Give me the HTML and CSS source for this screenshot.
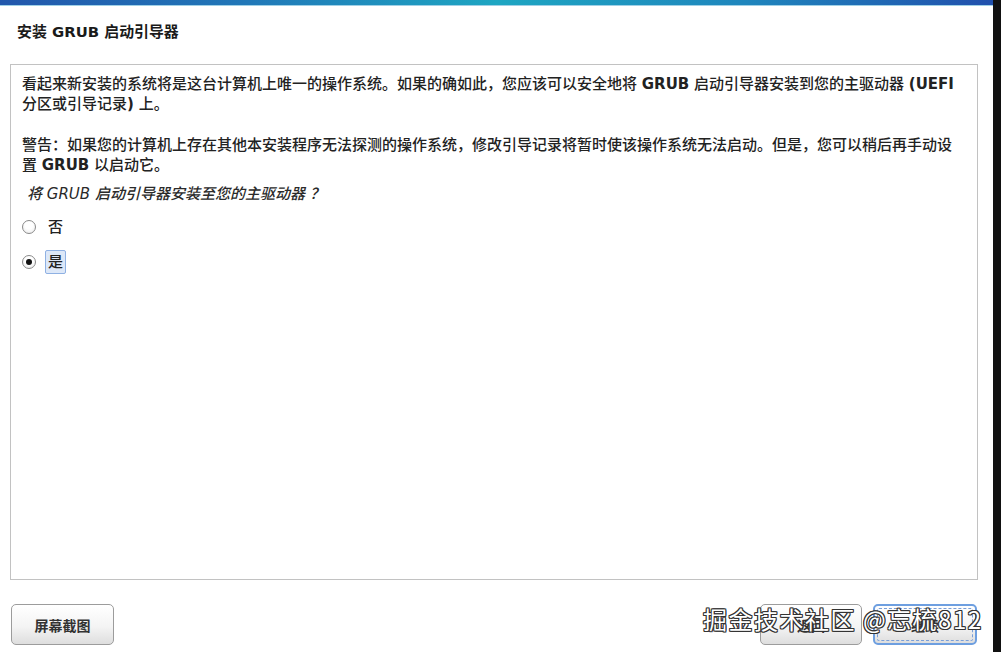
FILE: index.html
```html
<!DOCTYPE html>
<html lang="zh-CN">
<head>
<meta charset="utf-8">
<title>安装 GRUB 启动引导器</title>
<link rel="stylesheet" href="styles.css">
</head>
<body>
<div class="screen">
  <div class="main">
    <div class="topbar"></div>
    <h1 class="title">安装 <b class="latin">GRUB</b> 启动引导器</h1>
    <div class="panel">
      <p class="para">看起来新安装的系统将是这台计算机上唯一的操作系统。如果的确如此，您应该可以安全地将 <b class="latin">GRUB</b> 启动引导器安装到您的主驱动器 <b class="latin">(UEFI</b><br>分区或引导记录<b class="latin">)</b> 上。</p>
      <p class="para second">警告：如果您的计算机上存在其他本安装程序无法探测的操作系统，修改引导记录将暂时使该操作系统无法启动。但是，您可以稍后再手动设<br>置 <b class="latin">GRUB</b> 以启动它。</p>
      <p class="question">将 <span class="latin-i">GRUB</span> 启动引导器安装至您的主驱动器 ？</p>
      <div class="options">
        <label class="option"><span class="radio"></span><span class="opt-label">否</span></label>
        <label class="option"><span class="radio checked"></span><span class="opt-label focused">是</span></label>
      </div>
    </div>
    <div class="buttons">
      <button class="btn">屏幕截图</button>
      <div class="spacer"></div>
      <button class="btn back">返回</button>
      <button class="btn primary"><span class="focus-ring">继续</span></button>
    </div>
    <div class="watermark">掘金技术社区 @忘梳812</div>
  </div>
  <div class="edge"></div>
</div>
</body>
</html>
```
FILE: styles.css
```css
html, body {
  margin: 0;
  padding: 0;
  background: #ffffff;
}
body {
  font-family: "DejaVu Sans", "Noto Sans CJK SC", sans-serif;
  color: #222222;
}
.screen {
  display: flex;
  width: 1001px;
  height: 652px;
  overflow: hidden;
}
.main {
  position: relative;
  flex: 1;
  display: flex;
  flex-direction: column;
  background: #ffffff;
}
.edge {
  width: 8px;
  background: #111111;
}
.topbar {
  height: 5px;
  background: linear-gradient(90deg, #2257ac 0%, #2178b8 25%, #1ea6c2 50%, #1f86bd 75%, #2150ad 100%);
  border-bottom: 1px solid #9fd0e6;
}
.title {
  margin: 16px 0 0 17px;
  height: 20px;
  font-size: 14.9px;
  line-height: 20px;
  font-weight: bold;
  color: #1a1a1a;
}
.latin {
  font-family: "DejaVu Sans", sans-serif;
  font-weight: bold;
}
.latin-i {
  font-family: "DejaVu Sans", sans-serif;
  font-style: italic;
}
.panel {
  margin: 22px 15px 0 10px;
  height: 516px;
  box-sizing: border-box;
  border: 1px solid #c2c2c2;
  padding: 9px 11px 0 11px;
  font-size: 15px;
  line-height: 20px;
  font-weight: 500;
}
.para {
  margin: 0;
  white-space: nowrap;
}
.para.second {
  margin-top: 21px;
}
.question {
  margin: 9px 0 0 5px;
  font-style: italic;
  color: #2a2a2a;
}
.options {
  display: flex;
  flex-direction: column;
  gap: 11px;
  margin-top: 11px;
}
.option {
  display: flex;
  align-items: center;
  gap: 9px;
  height: 24px;
}
.radio {
  width: 12px;
  height: 12px;
  border: 1px solid #8a8a8a;
  border-radius: 50%;
  background: radial-gradient(circle at 50% 35%, #ffffff 40%, #e6e6e6 100%);
  display: flex;
  align-items: center;
  justify-content: center;
}
.radio.checked::after {
  content: "";
  width: 6px;
  height: 6px;
  border-radius: 50%;
  background: #111;
}
.opt-label {
  padding: 1px 2px;
  border: 1px solid transparent;
  line-height: 20px;
}
.opt-label.focused {
  background: #dde8f8;
  border-color: #8fb1e3;
  border-radius: 2px;
}
.buttons {
  display: flex;
  align-items: center;
  margin: 24px 16px 0 11px;
  gap: 11px;
}
.spacer {
  flex: 1;
}
.btn {
  height: 41px;
  width: 103px;
  box-sizing: border-box;
  border: 1px solid #9c9c9c;
  border-radius: 5px;
  background: linear-gradient(#ffffff 0%, #f4f4f4 55%, #dedede 100%);
  font-family: "DejaVu Sans", "Noto Sans CJK SC", sans-serif;
  font-size: 14px;
  font-weight: bold;
  color: #333;
  padding: 0;
}
.btn.back {
  width: 102px;
}
.btn.primary {
  width: 104px;
  border: 2px solid #6e9fe0;
  display: flex;
  align-items: stretch;
  justify-content: stretch;
  padding: 2px;
}
.focus-ring {
  flex: 1;
  display: flex;
  align-items: center;
  justify-content: center;
  border: 1px dashed #7a9fd8;
  border-radius: 2px;
}
.watermark {
  position: absolute;
  left: 703px;
  top: 604px;
  font-family: "Noto Sans CJK SC", "DejaVu Sans", sans-serif;
  font-size: 24px;
  letter-spacing: 1.5px;
  line-height: 30px;
  color: #ffffff;
  white-space: nowrap;
  text-shadow: 1px 0 0 #333, -1px 0 0 #333, 0 1px 0 #333, 0 -1px 0 #333, 1px 1px 0 #333, -1px -1px 0 #333, 1px -1px 0 #333, -1px 1px 0 #333;
}
```
